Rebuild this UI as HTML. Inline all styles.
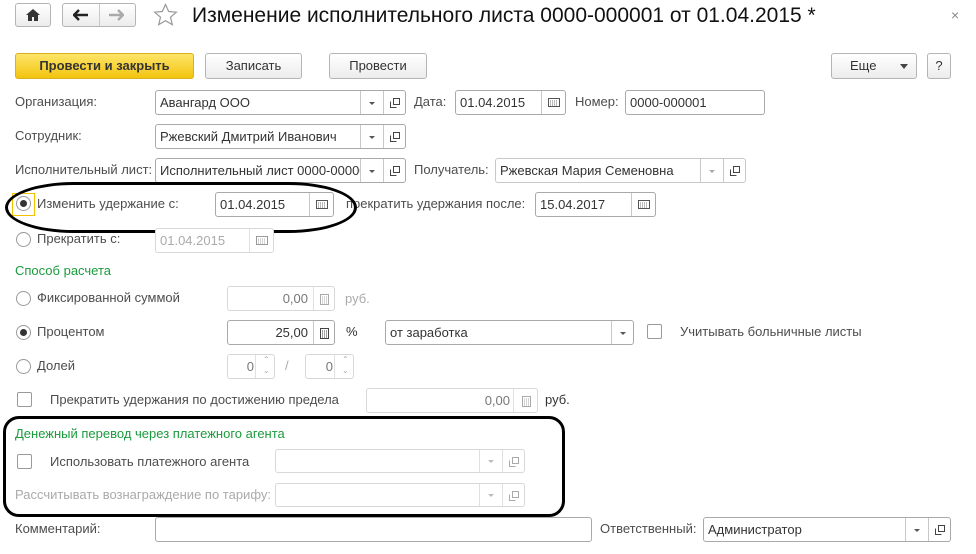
<!DOCTYPE html>
<html><head><meta charset="utf-8"><style>
*{box-sizing:border-box;margin:0;padding:0}
body{width:976px;height:554px;background:#fff;position:relative;overflow:hidden;font-family:"Liberation Sans",Arial,sans-serif;font-size:13px;color:#4d4d4d}
.a{position:absolute;white-space:nowrap}
.l{position:absolute;white-space:nowrap;line-height:16px}
.f{position:absolute;border:1px solid #a9a9a9;border-radius:3px;background:#fff;height:25px;color:#333;line-height:23px;padding-left:4px;overflow:hidden}
.f.d{border-color:#d8d8d8;color:#aaa}
.seg{position:absolute;top:0;height:100%;border-left:1px solid #c8c8c8}
.f.d .seg{border-left-color:#e0e0e0}
.btn{position:absolute;height:26px;border:1px solid #b5b5b5;border-radius:3px;background:linear-gradient(#fff,#ececec);text-align:center;line-height:24px;color:#333}
.rad{position:absolute;width:15px;height:15px;border:1px solid #9a9a9a;border-radius:50%;background:#fff}
.rad.on::after{content:"";position:absolute;left:3px;top:3px;width:7px;height:7px;border-radius:50%;background:#333}
.chk{position:absolute;width:15px;height:15px;border:1px solid #9a9a9a;border-radius:2px;background:#fff}
.tri{position:absolute;width:0;height:0;border-left:3px solid transparent;border-right:3px solid transparent;border-top:3px solid #555}
.g{color:#1a9b3c}
</style></head><body>
<svg width="0" height="0" style="position:absolute"><defs>
<g id="cal"><rect x=".5" y=".5" width="8" height="10" fill="none" stroke="currentColor"/><path d="M2 3h5M2 5h5M2 7h5M2 9h5" stroke="currentColor" stroke-dasharray="1 1"/></g>
<g id="op"><path d="M3.5.5h6v6h-6zM.5 3.5v6h6" fill="none" stroke="currentColor"/></g>
</defs></svg>
<!-- top bar -->
<div class="btn" style="left:15px;top:3px;width:36px;height:24px"><svg width="14" height="12" style="margin-top:5px" viewBox="0 0 14 12"><path d="M7 0L0 6h2v6h4V8h2v4h4V6h2z" fill="#333"/></svg></div>
<div class="btn" style="left:62px;top:3px;width:74px;height:24px"></div>
<div class="a" style="left:99px;top:4px;height:22px;border-left:1px solid #c8c8c8"></div>
<svg class="a" style="left:73px;top:9px" width="16" height="12" viewBox="0 0 16 12"><path d="M1 6h14M6 1L1 6l5 5" stroke="#222" stroke-width="2.4" fill="none"/></svg>
<svg class="a" style="left:108px;top:9px" width="16" height="12" viewBox="0 0 16 12"><path d="M1 6h14M10 1l5 5-5 5" stroke="#aaa" stroke-width="2.4" fill="none"/></svg>
<svg class="a" style="left:153px;top:3px" width="25" height="24" viewBox="0 0 25 24"><path d="M12.5 1.5l3.2 7 7.6.7-5.8 5 1.8 7.5-6.8-4-6.8 4 1.8-7.5-5.8-5 7.6-.7z" fill="none" stroke="#999" stroke-width="1.2"/></svg>
<div class="a" style="left:192px;top:3px;font-size:21px;color:#111;line-height:26px">Изменение исполнительного листа 0000-000001 от 01.04.2015 *</div>
<div class="a" style="left:951px;top:7px;font-size:14px;color:#888">×</div>
<!-- buttons -->
<div class="btn" style="left:15px;top:53px;width:179px;background:linear-gradient(#fde56a,#f3c40e);border-color:#d8b21c;font-weight:bold;color:#333">Провести и закрыть</div>
<div class="btn" style="left:205px;top:53px;width:97px">Записать</div>
<div class="btn" style="left:329px;top:53px;width:98px">Провести</div>
<div class="btn" style="left:831px;top:53px;width:86px;text-align:left;padding-left:18px">Еще<svg style="position:absolute;left:68px;top:10px" width="8" height="5"><path d="M0 0h8L4 5z" fill="#444"/></svg></div>
<div class="btn" style="left:927px;top:53px;width:24px">?</div>
<!-- row1 -->
<div class="l" style="left:15px;top:94px">Организация:</div>
<div class="f" style="left:155px;top:90px;width:251px">Авангард ООО<div class="seg" style="left:204px;width:23px"><span class="tri" style="left:8px;top:11px"></span></div><div class="seg" style="left:227px;width:23px;color:#444"><svg style="position:absolute;left:6px;top:7px" width="10" height="10"><use href="#op"/></svg></div></div>
<div class="l" style="left:414px;top:94px">Дата:</div>
<div class="f" style="left:455px;top:90px;width:111px">01.04.2015<div class="seg" style="left:85px;width:25px"><svg style="position:absolute;left:6px;top:7px" width="12" height="9"><rect x=".5" y=".5" width="11" height="8" fill="none" stroke="#555"/><path d="M2 3h8M2 5h8M2 7h8" stroke="#777" stroke-dasharray="1 1"/></svg></div></div>
<div class="l" style="left:575px;top:94px">Номер:</div>
<div class="f" style="left:625px;top:90px;width:140px">0000-000001</div>
<!-- row2 -->
<div class="l" style="left:15px;top:128px">Сотрудник:</div>
<div class="f" style="left:155px;top:124px;width:251px">Ржевский Дмитрий Иванович<div class="seg" style="left:204px;width:23px"><span class="tri" style="left:8px;top:11px"></span></div><div class="seg" style="left:227px;width:23px;color:#444"><svg style="position:absolute;left:6px;top:7px" width="10" height="10"><use href="#op"/></svg></div></div>
<!-- row3 -->
<div class="l" style="left:15px;top:162px">Исполнительный лист:</div>
<div class="f" style="left:155px;top:158px;width:251px">Исполнительный лист 0000-00000<div class="seg" style="left:204px;width:23px;background:#fff"><span class="tri" style="left:8px;top:11px"></span></div><div class="seg" style="left:227px;width:23px;color:#444"><svg style="position:absolute;left:6px;top:7px" width="10" height="10"><use href="#op"/></svg></div></div>
<div class="l" style="left:414px;top:162px">Получатель:</div>
<div class="f" style="left:495px;top:158px;width:251px;border-color:#c8c8c8">Ржевская Мария Семеновна<div class="seg" style="left:204px;width:23px"><span class="tri" style="left:8px;top:11px;border-top-color:#aaa"></span></div><div class="seg" style="left:227px;width:23px;color:#444"><svg style="position:absolute;left:6px;top:7px" width="10" height="10"><use href="#op"/></svg></div></div>
<!-- row4 -->
<div class="a" style="left:12px;top:193px;width:23px;height:23px;border:1px solid #f2c200"></div>
<div class="rad on" style="left:16px;top:196px"></div>
<div class="l" style="left:37px;top:196px">Изменить удержание с:</div>
<div class="f" style="left:215px;top:192px;width:119px">01.04.2015<div class="seg" style="left:93px;width:25px"><svg style="position:absolute;left:6px;top:7px" width="12" height="9"><rect x=".5" y=".5" width="11" height="8" fill="none" stroke="#555"/><path d="M2 3h8M2 5h8M2 7h8" stroke="#777" stroke-dasharray="1 1"/></svg></div></div>
<div class="l" style="left:346px;top:196px">прекратить удержания после:</div>
<div class="f" style="left:535px;top:192px;width:121px">15.04.2017<div class="seg" style="left:95px;width:25px"><svg style="position:absolute;left:6px;top:7px" width="12" height="9"><rect x=".5" y=".5" width="11" height="8" fill="none" stroke="#555"/><path d="M2 3h8M2 5h8M2 7h8" stroke="#777" stroke-dasharray="1 1"/></svg></div></div>
<div class="a" style="left:5px;top:182px;width:352px;height:51px;border:3px solid #000;border-radius:70px/26px"></div>
<!-- row5 -->
<div class="rad" style="left:16px;top:232px"></div>
<div class="l" style="left:37px;top:231px">Прекратить с:</div>
<div class="f d" style="left:155px;top:228px;width:119px">01.04.2015<div class="seg" style="left:93px;width:25px"><svg style="position:absolute;left:6px;top:7px" width="12" height="9"><rect x=".5" y=".5" width="11" height="8" fill="none" stroke="#999"/><path d="M2 3h8M2 5h8M2 7h8" stroke="#aaa" stroke-dasharray="1 1"/></svg></div></div>
<div class="l g" style="left:15px;top:263px">Способ расчета</div>
<!-- calc -->
<div class="rad" style="left:16px;top:291px"></div>
<div class="l" style="left:37px;top:290px">Фиксированной суммой</div>
<div class="f d" style="left:227px;top:286px;width:108px;text-align:right;padding-right:26px;color:#777">0,00<div class="seg" style="left:85px;width:22px;color:#aaa"><svg style="position:absolute;left:6px;top:7px" width="9" height="11"><use href="#cal"/></svg></div></div>
<div class="l" style="left:345px;top:291px;color:#aaa">руб.</div>
<div class="rad on" style="left:16px;top:325px"></div>
<div class="l" style="left:37px;top:324px">Процентом</div>
<div class="f" style="left:227px;top:320px;width:108px;text-align:right;padding-right:26px">25,00<div class="seg" style="left:85px;width:22px;color:#444"><svg style="position:absolute;left:6px;top:7px" width="9" height="11"><use href="#cal"/></svg></div></div>
<div class="l" style="left:346px;top:324px;color:#333">%</div>
<div class="f" style="left:385px;top:320px;width:249px">от заработка<div class="seg" style="left:225px;width:23px"><span class="tri" style="left:8px;top:11px"></span></div></div>
<div class="chk" style="left:647px;top:324px"></div>
<div class="l" style="left:680px;top:324px">Учитывать больничные листы</div>
<div class="rad" style="left:16px;top:359px"></div>
<div class="l" style="left:37px;top:358px">Долей</div>
<div class="f d" style="left:227px;top:354px;width:48px;text-align:right;padding-right:20px;color:#777">0<div class="seg" style="left:27px;width:20px"><span class="a" style="left:7px;top:-7px;font-size:8px;color:#aaa">⌃</span><span class="a" style="left:7px;top:4px;font-size:8px;color:#aaa">⌄</span></div></div>
<div class="l" style="left:285px;top:358px;color:#aaa">/</div>
<div class="f d" style="left:305px;top:354px;width:49px;text-align:right;padding-right:20px;color:#777">0<div class="seg" style="left:28px;width:20px"><span class="a" style="left:7px;top:-7px;font-size:8px;color:#aaa">⌃</span><span class="a" style="left:7px;top:4px;font-size:8px;color:#aaa">⌄</span></div></div>
<div class="chk" style="left:17px;top:392px"></div>
<div class="l" style="left:50px;top:392px">Прекратить удержания по достижению предела</div>
<div class="f d" style="left:366px;top:388px;width:172px;text-align:right;padding-right:27px;color:#777">0,00<div class="seg" style="left:146px;width:25px;color:#aaa"><svg style="position:absolute;left:8px;top:7px" width="9" height="11"><use href="#cal"/></svg></div></div>
<div class="l" style="left:545px;top:392px;color:#333">руб.</div>
<!-- agent -->
<div class="a" style="left:3px;top:416px;width:562px;height:101px;border:3px solid #000;border-radius:16px"></div>
<div class="l g" style="left:15px;top:426px">Денежный перевод через платежного агента</div>
<div class="chk" style="left:17px;top:454px"></div>
<div class="l" style="left:50px;top:454px">Использовать платежного агента</div>
<div class="f d" style="left:275px;top:449px;width:250px;height:24px"><div class="seg" style="left:203px;width:23px"><span class="tri" style="left:8px;top:10px;border-top-color:#bbb"></span></div><div class="seg" style="left:226px;width:23px;color:#aaa"><svg style="position:absolute;left:6px;top:7px" width="10" height="10"><use href="#op"/></svg></div></div>
<div class="l" style="left:15px;top:487px;color:#aaa">Рассчитывать вознаграждение по тарифу:</div>
<div class="f d" style="left:275px;top:483px;width:250px;height:24px"><div class="seg" style="left:203px;width:23px"><span class="tri" style="left:8px;top:10px;border-top-color:#bbb"></span></div><div class="seg" style="left:226px;width:23px;color:#aaa"><svg style="position:absolute;left:6px;top:7px" width="10" height="10"><use href="#op"/></svg></div></div>
<!-- bottom -->
<div class="l" style="left:15px;top:521px">Комментарий:</div>
<div class="f" style="left:155px;top:517px;width:437px"></div>
<div class="l" style="left:600px;top:521px">Ответственный:</div>
<div class="f" style="left:703px;top:517px;width:248px">Администратор<div class="seg" style="left:201px;width:23px"><span class="tri" style="left:8px;top:11px"></span></div><div class="seg" style="left:224px;width:23px;color:#444"><svg style="position:absolute;left:6px;top:7px" width="10" height="10"><use href="#op"/></svg></div></div>
</body></html>
